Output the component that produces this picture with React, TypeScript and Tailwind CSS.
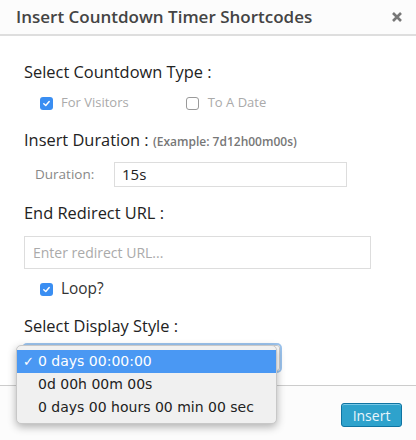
import React from 'react';

const Check = ({ checked }: { checked: boolean }) =>
	checked ? (
		<span className="flex h-[13px] w-[13px] shrink-0 items-center justify-center rounded-[3px] bg-[#3a8ef2]">
			<svg width="9" height="9" viewBox="0 0 10 10">
				<path d="M2 5.2 L4.2 7.3 L8 2.8" fill="none" stroke="white" strokeWidth="1.6" strokeLinecap="round" strokeLinejoin="round" />
			</svg>
		</span>
	) : (
		<span className="block h-[13px] w-[13px] shrink-0 rounded-[3px] border border-[#9a9a9a] bg-white" />
	);

const options = ['0 days 00:00:00', '0d 00h 00m 00s', '0 days 00 hours 00 min 00 sec'];

export default function App() {
	return (
		<div
			className="relative h-[440px] w-[416px] overflow-hidden bg-white text-[#222]"
			style={{ fontFamily: '"Open Sans", sans-serif' }}>
			{/* шапка */}
			<div className="flex h-[36px] items-center justify-between border-b-2 border-[#dedede] bg-[#fcfcfc] pl-4 pr-[13px]">
				<h1 className="text-[17px] font-semibold text-[#444]">Insert Countdown Timer Shortcodes</h1>
				<svg width="12" height="12" viewBox="0 0 12 12">
					<path d="M2 2 L10 10 M10 2 L2 10" stroke="#777" strokeWidth="2.6" strokeLinecap="butt" />
				</svg>
			</div>

			<div className="flex h-[349px] flex-col px-6 pt-[25px]">
				<p className="text-[16.4px] font-medium leading-[22px]">Select Countdown Type :</p>
				<div className="mt-[10px] flex h-[20px] items-center pl-4 text-[13px] text-[#aaa]">
					<Check checked />
					<span className="ml-2">For Visitors</span>
					<span className="ml-[57px]">
						<Check checked={false} />
					</span>
					<span className="ml-[9px]">To A Date</span>
				</div>

				<p className="mt-[16px] text-[16.4px] font-medium leading-[22px]">
					Insert Duration :{' '}
					<span className="text-[12px] font-semibold text-[#777]">(Example: 7d12h00m00s)</span>
				</p>
				<div className="mt-[9px] flex items-center pl-[11px]">
					<span className="w-[79px] text-[13.5px] text-[#888]">Duration:</span>
					<div className="flex h-[25px] w-[233px] items-center border border-[#ddd] px-[7px] text-[15px] text-[#222]">
						15s
					</div>
				</div>

				<p className="mt-[15px] text-[16.4px] font-medium leading-[22px]">End Redirect URL :</p>
				<div className="mt-[12px] flex h-[33px] w-[347px] items-center border border-[#ddd] px-[8px] text-[14px] text-[#aaa]">
					Enter redirect URL...
				</div>
				<div className="mt-[10px] flex h-[20px] items-center pl-4 text-[15.4px] text-[#333]">
					<Check checked />
					<span className="ml-2">Loop?</span>
				</div>

				<p className="mt-[16px] text-[16.4px] font-medium leading-[22px]">Select Display Style :</p>
				<div className="mt-[8px] h-[26px] w-[256px] rounded-[3px] border border-[#ccc] shadow-[0_0_0_2px_#9cc4ee]" />
			</div>

			{/* подвал */}
			<div className="flex h-[55px] items-start justify-end border-t border-[#ccc] bg-[#fcfcfc] pr-[14px] pt-[17px]">
				<button className="h-[24px] w-[61px] rounded-[3px] border border-[#0f74a2] bg-[#2ea2cc] text-[14px] text-[#e8f5fb] shadow-[inset_0_1px_0_#78c8e6]">
					Insert
				</button>
			</div>

			{/* выпадающий список */}
			<div
				className="absolute left-[16px] top-[345px] w-[261px] rounded-[5px] border border-[#c8c8c8] bg-[#f0f0f0] py-[4px] text-[14px] text-[#222] shadow-[0_3px_8px_rgba(0,0,0,0.3)]"
				style={{ fontFamily: '"DejaVu Sans", Verdana, sans-serif' }}>
				{options.map((o, i) => (
					<div
						key={o}
						className={
							i === 0
								? 'relative flex h-[23px] items-center bg-[#4a98f3] pl-[21px] text-white'
								: 'flex h-[23px] items-center pl-[21px]'
						}>
						{i === 0 && <span className="absolute left-[6px] text-[13px]">✓</span>}
						{o}
					</div>
				))}
			</div>
		</div>
	);
}
